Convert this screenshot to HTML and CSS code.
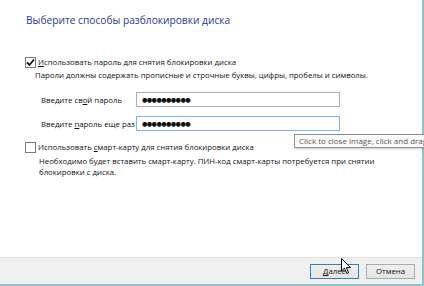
FILE: index.html
```html
<!DOCTYPE html>
<html lang="ru">
<head>
  <meta charset="UTF-8" />
  <title>Шифрование диска</title>
  <link rel="stylesheet" href="styles.css">
</head>
<body>
  <div class="dialog">
    <div class="content">
      <h1 class="title">Выберите способы разблокировки диска</h1>

      <div class="option">
        <span class="checkbox checked">
          <svg width="9" height="9" viewBox="0 0 9 9"><path d="M1 4.5 L3.5 7 L8 1.5" fill="none" stroke="#111" stroke-width="1.8"/></svg>
        </span>
        <span><u>И</u>спользовать пароль для снятия блокировки диска</span>
      </div>
      <p class="hint">Пароли должны содержать прописные и строчные буквы, цифры, пробелы и символы.</p>

      <div class="fields">
        <div class="field">
          <label>Введите св<u>о</u>й пароль</label>
          <div class="input">●●●●●●●●●●</div>
        </div>
        <div class="field">
          <label>Введите <u>п</u>ароль еще раз</label>
          <div class="input focused">●●●●●●●●●●</div>
        </div>
      </div>

      <div class="option second">
        <span class="checkbox"></span>
        <span>Использовать <u>с</u>март-карту для снятия блокировки диска</span>
      </div>
      <p class="desc">Необходимо будет вставить смарт-карту. ПИН-код смарт-карты потребуется при снятии блокировки с диска.</p>
    </div>

    <div class="footer">
      <button class="btn default"><u>Д</u>алее</button>
      <button class="btn">Отмена</button>
    </div>
  </div>

  <div class="tooltip">Click to close image, click and drag</div>

  <svg class="cursor" width="11" height="17" viewBox="0 0 11 17">
    <path d="M0.5 0.5 L0.5 13 L3.5 10.2 L5.8 15.5 L7.6 14.7 L5.4 9.6 L9.5 9.6 Z" fill="#fff" stroke="#000" stroke-width="1"/>
  </svg>
</body>
</html>
```

FILE: styles.css
```css
body {
  margin: 0;
  width: 424px;
  height: 286px;
  overflow: hidden;
  position: relative;
  font-family: "Open Sans", "DejaVu Sans", sans-serif;
  font-size: 7.8px;
  color: #111;
  background: #fff;
}
.dialog {
  height: 284px;
  display: flex;
  flex-direction: column;
  border-right: 2px solid #8cc7c7;
  border-bottom: 2px solid #8cc7c7;
}
.content {
  flex: 1;
  padding: 12px 0 0 25px;
}
.title {
  margin: 0 0 28px 1px;
  font-size: 10.2px;
  font-weight: normal;
  color: #1f3c90;
  line-height: 16px;
}
u {
  text-decoration: underline;
}
.option {
  display: flex;
  align-items: center;
  gap: 2px;
  height: 12px;
}
.checkbox {
  width: 9px;
  height: 9px;
  border: 1px solid #7a7a7a;
  background: #fff;
  display: flex;
  align-items: center;
  justify-content: center;
}
.hint {
  margin: 1px 0 0 10px;
  line-height: 12px;
}
.fields {
  margin: 11px 0 0 16px;
  display: flex;
  flex-direction: column;
  gap: 9px;
}
.field {
  display: flex;
  align-items: center;
  height: 15px;
}
.field label {
  width: 95px;
}
.input {
  width: 197px;
  height: 13px;
  border: 1px solid #abadb3;
  padding-left: 5px;
  font-size: 6.2px;
  letter-spacing: -0.6px;
  line-height: 13px;
  color: #111;
}
.input.focused {
  border-color: #7eb4ea;
}
.option.second {
  margin-top: 10px;
}
.desc {
  margin: 3px 0 0 14px;
  width: 345px;
  line-height: 11px;
}
.footer {
  height: 26px;
  background: #f0f0f0;
  border-top: 1px solid #e2e2e2;
  display: flex;
  align-items: center;
  justify-content: flex-end;
  gap: 7px;
  padding-right: 7px;
}
.btn {
  width: 49px;
  height: 15px;
  padding: 0;
  font-family: inherit;
  font-size: 7.8px;
  color: #111;
  background: linear-gradient(#f0f0f0, #e5e5e5);
  border: 1px solid #acacac;
}
.btn.default {
  border-color: #3c7fb1;
}
.tooltip {
  position: absolute;
  left: 294px;
  top: 134px;
  height: 12px;
  padding: 0 4px;
  white-space: nowrap;
  font-size: 8px;
  line-height: 12px;
  color: #575757;
  background: #fbfbfb;
  border: 1px solid #8e8e8e;
  box-shadow: 1px 1px 2px rgba(0, 0, 0, 0.2);
}
.cursor {
  position: absolute;
  left: 341px;
  top: 258px;
}
```
